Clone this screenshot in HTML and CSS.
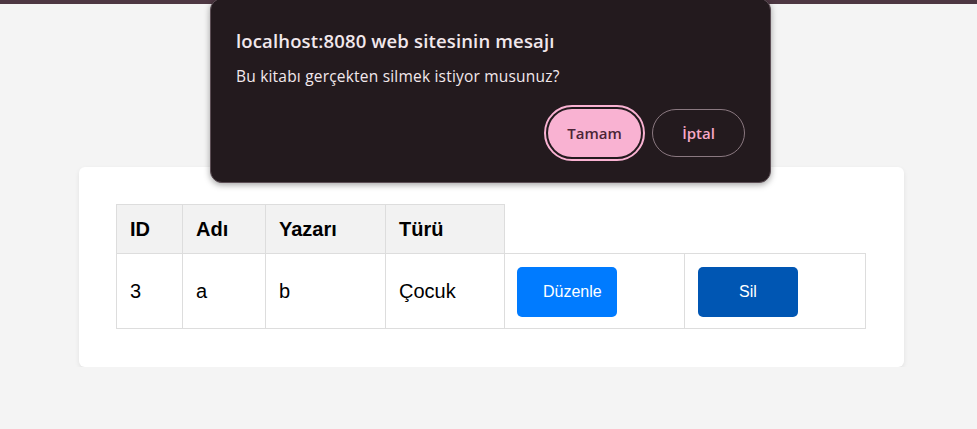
FILE: index.html
```html
<!DOCTYPE html>
<html lang="tr">
<head>
<meta charset="utf-8">
<title>Kitaplar</title>
<link rel="stylesheet" href="styles.css">
</head>
<body>
<div class="topbar"></div>
<main class="page">
  <section class="card">
    <table class="books">
      <colgroup>
        <col class="c-id"><col class="c-name"><col class="c-author"><col class="c-type"><col class="c-edit"><col class="c-del">
      </colgroup>
      <tr>
        <th>ID</th><th>Adı</th><th>Yazarı</th><th>Türü</th>
      </tr>
      <tr>
        <td>3</td><td>a</td><td>b</td><td>Çocuk</td>
        <td class="act act-edit"><button class="btn btn-edit">Düzenle</button></td>
        <td class="act"><button class="btn btn-del">Sil</button></td>
      </tr>
    </table>
  </section>
</main>
<div class="dialog">
  <div class="dialog-title">localhost:8080 web sitesinin mesajı</div>
  <div class="dialog-msg">Bu kitabı gerçekten silmek istiyor musunuz?</div>
  <div class="dialog-actions">
    <button class="dbtn dbtn-ok">Tamam</button>
    <button class="dbtn dbtn-cancel">İptal</button>
  </div>
</div>
</body>
</html>
```
FILE: styles.css
```css
html, body {
  margin: 0;
  padding: 0;
  background: #f4f4f4;
  font-family: "Liberation Sans", Arial, sans-serif;
}
.topbar {
  height: 4px;
  background: #4d3742;
}
.page {
  padding-top: 163px;
  padding-left: 79px;
}
.card {
  width: 825px;
  height: 200px;
  box-sizing: border-box;
  background: #fff;
  border-radius: 6px;
  box-shadow: 0 2px 5px rgba(0,0,0,0.08);
  padding: 37px 0 0 37px;
}
.books {
  border-collapse: collapse;
  table-layout: fixed;
  width: 750px;
  font-size: 20px;
  color: #000;
}
.c-id { width: 66px; }
.c-name { width: 83px; }
.c-author { width: 120px; }
.c-type { width: 119px; }
.c-edit { width: 180px; }
.c-del { width: 181px; }
.books th, .books td {
  border: 1px solid #dddddd;
  padding: 12px 13px;
  text-align: left;
  vertical-align: middle;
  line-height: 23px;
}
.books th {
  background: #f2f2f2;
  font-weight: bold;
  line-height: 24px;
}
.books td.act {
  padding: 13px 13px 11px 13px;
}
.books td.act-edit {
  padding-left: 12px;
}
.btn {
  width: 100px;
  height: 50px;
  border: none;
  border-radius: 5px;
  color: #fff;
  font-family: "Liberation Sans", Arial, sans-serif;
  font-size: 16px;
  display: block;
}
.btn-edit {
  background: #007bff;
  text-align: left;
  padding: 0 0 0 26px;
}
.btn-del {
  background: #0056b3;
  text-align: center;
  padding: 0;
}
.dialog {
  position: absolute;
  left: 210px;
  top: -2px;
  width: 561px;
  height: 185px;
  box-sizing: border-box;
  background: #231a1e;
  border: 1px solid #5c4e55;
  border-radius: 12px;
  box-shadow: 0 2px 6px rgba(0,0,0,0.35);
  padding: 30px 25px 0 25px;
  color: #f2e8ec;
  font-family: "Open Sans", "Noto Sans", sans-serif;
}
.dialog-title {
  font-size: 18.5px;
  font-weight: 600;
  line-height: 24px;
  letter-spacing: 0.15px;
}
.dialog-msg {
  font-size: 15.5px;
  line-height: 20px;
  letter-spacing: 0.2px;
  margin-top: 13px;
}
.dialog-actions {
  display: flex;
  justify-content: flex-end;
  gap: 11px;
  margin-top: 23px;
}
.dbtn {
  width: 93px;
  height: 48px;
  border-radius: 24px;
  font-family: "Open Sans", "Noto Sans", sans-serif;
  font-size: 15px;
  font-weight: 600;
  padding: 0;
}
.dbtn-ok {
  background: #f9b2d2;
  color: #4b2536;
  border: none;
  outline: 2px solid #f9b2d2;
  outline-offset: 2px;
}
.dbtn-cancel {
  background: transparent;
  color: #f7a8c8;
  border: 1px solid #8a7880;
}
```
